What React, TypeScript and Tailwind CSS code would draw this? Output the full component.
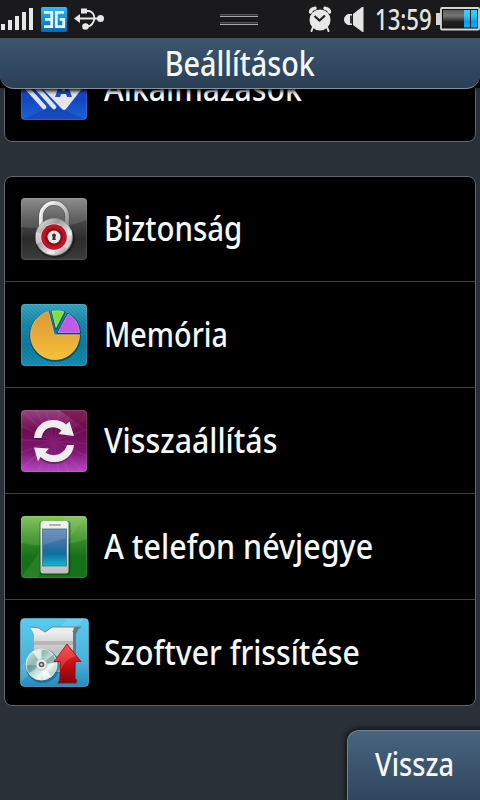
import type { ReactNode } from 'react'

type Row = { label: string; icon: ReactNode; stretch: string }

function Gradient({ id, stops, x2 = 0 }: { id: string; stops: string[]; x2?: number }) {
  return (
    <linearGradient id={id} x1="0" y1="0" x2={x2} y2="1">
      {stops.map((color, i) => (
        <stop key={i} offset={i / (stops.length - 1)} stopColor={color} />
      ))}
    </linearGradient>
  )
}

function Tile({ id, stops, children }: { id: string; stops: string[]; children: ReactNode }) {
  return (
    <svg width="66" height="62" viewBox="0 0 66 62">
      <defs>
        <Gradient id={id} stops={stops} />
        <clipPath id={`${id}-clip`}>
          <rect width="66" height="62" rx="4" />
        </clipPath>
      </defs>
      <g clipPath={`url(#${id}-clip)`}>
        <rect width="66" height="62" fill={`url(#${id})`} />
        {children}
      </g>
      <rect x=".5" y=".5" width="65" height="61" rx="3.5" fill="none" stroke="#fff" strokeOpacity=".1" />
    </svg>
  )
}

function AppsIcon() {
  return (
    <Tile id="apps" stops={['#3c86e8', '#1d50c4', '#1247c0', '#1f62d4']}>
      <path d="M0 62 33 48 66 62z" fill="#0c2f9a" opacity=".35" />
      <path d="M-3 20 23 49M7 20 33 49" stroke="#dfe3ea" strokeWidth="4.5" strokeLinecap="round" />
      <path d="M17 26 40 10 63 28 45 51q-2 2-4 0z" fill="#e4e6ec" />
      <path d="m34 39 6-17h5l6 17h-5l-1-3h-5l-1 3zm7-6h3l-1.500-5z" fill="#1c4fc0" />
    </Tile>
  )
}

function LockIcon() {
  return (
    <Tile id="lock" stops={['#7d7d7d', '#4a4a4a', '#2b2b2b', '#3d3d3d']}>
      <defs>
        <Gradient id="steel" stops={['#ffffff', '#9c9c9c', '#e8e8e8', '#777777']} x2={1} />
        <Gradient id="shackle" stops={['#f4f4f4', '#cdcdcd', '#888888']} x2={1} />
      </defs>
      <path d="M0 0h66v22Q38 33 0 29z" fill="#fff" opacity=".13" />
      <ellipse cx="34" cy="41" rx="20" ry="19" fill="#000" opacity=".35" />
      <path d="M20 30V18a13 13 0 0 1 26 0v12" fill="none" stroke="#555" strokeWidth="5" />
      <path d="M20 30V18a13 13 0 0 1 26 0v12" fill="none" stroke="url(#shackle)" strokeWidth="3.800" />
      <path d="M19 28V18a13.500 13.500 0 0 1 13.500-13.500" fill="none" stroke="#fff" strokeWidth="1" />
      <circle cx="33" cy="39" r="18.500" fill="url(#steel)" stroke="#8b8b8b" strokeWidth=".7" />
      <path d="M33 39 15 34v12zM33 39l18-7v5z" fill="#fff" opacity=".45" />
      <path d="m33 39-7 17h8zM33 39l13 12 4-6z" fill="#fff" opacity=".3" />
      <circle cx="33" cy="39" r="13.500" fill="#ddd" />
      <circle cx="33" cy="39" r="12.800" fill="#bd1525" />
      <circle cx="33" cy="39" r="9" fill="#8f0d19" />
      <circle cx="33" cy="39" r="6.500" fill="#e9e9e9" />
      <circle cx="33" cy="37.500" r="1.900" fill="#333" />
      <path d="M32 38h2l.8 4h-3.600z" fill="#333" />
    </Tile>
  )
}

function PieIcon() {
  return (
    <Tile id="pie" stops={['#3ba5c1', '#1787a8', '#0e7a9e', '#178fb1']}>
      <defs>
        <Gradient id="gold" stops={['#d99a35', '#e8aa38', '#f4c338']} />
        <pattern id="hatch" width="4" height="4" patternUnits="userSpaceOnUse">
          <path d="m0 0 4 4" stroke="#04506c" strokeWidth=".7" opacity=".3" />
        </pattern>
      </defs>
      <rect width="66" height="62" fill="url(#hatch)" />
      <g fill="#043c50" stroke="#043c50" strokeWidth="2" strokeLinejoin="round" opacity=".7">
        <path d="M33.500 31.500h25.500A24.800 24.800 0 1 1 28 8z" />
        <path d="m36.500 29 10-19q12 6 12.500 19zM35 25 31 7.500q7-1 12.500 1z" />
      </g>
      <path d="M33.500 30.800h25A24.500 24.500 0 1 1 27.500 7.500z" fill="url(#gold)" stroke="#f7d27b" strokeWidth=".6" />
      <path d="m37 28.500 10-18.500q11 6 11.500 18.500z" fill="#c05be6" stroke="#dd94f5" strokeWidth=".7" />
      <path d="M35 23.500 31 7q7-1 12 .8z" fill="#7ee03c" stroke="#b3f57d" strokeWidth=".7" />
    </Tile>
  )
}

function ResetIcon() {
  return (
    <Tile id="reset" stops={['#9c4284', '#6d0e52', '#7d1770', '#ba4ac5']}>
      <g stroke="#ef7be0" strokeWidth="1.500" opacity=".1">
        <path d="M33 31 0 0M33 31 12-4M33 31 24-4M33 31 40-4M33 31 54-4M33 31 70 4M33 31 70 18M33 31 70 34M33 31 70 48M33 31 66 66M33 31 50 66M33 31 38 66M33 31 26 66M33 31 14 66M33 31-2 60M33 31-4 44M33 31-4 30M33 31-4 14" />
      </g>
      <path d="M38 0h28v20z" fill="#6b003b" opacity=".5" />
      <g transform="translate(0 1.500)" stroke="#3c0635" strokeWidth="7" fill="none" opacity=".45">
        <path d="M17 28Q20 13 33 13q7 0 12 6M49 35q-3 14-17 14-7 0-11-6" />
      </g>
      <g fill="#ededed">
        <path d="M13 28C14 17 22 10 32 10c6 0 10 1.500 13 4.500l3.500-3L53 26l-15.500-2 3-3.500C32 14 22 18 20.500 28z" />
        <path d="M53 35C52 45 44 52 34 52c-7 0-11-2-14.500-5l-2.500 4.500-4-14L28 38.500l-3.500 4C32 48 43 45 46 35z" />
      </g>
    </Tile>
  )
}

function PhoneIcon() {
  return (
    <Tile id="phone" stops={['#79bd53', '#3c8e2b', '#157019', '#157318']}>
      <defs>
        <Gradient id="screen" stops={['#5c82b2', '#4472a8', '#0d70a0', '#12b8d0']} />
        <Gradient id="body" stops={['#f4f4f4', '#dcdcdc', '#bebebe']} />
      </defs>
      <path d="M0 62 44 0h22L16 62z" fill="#aee884" opacity=".12" />
      <path d="M0 0h66v23Q34 34 0 27z" fill="#b6ef92" opacity=".17" />
      <rect x="18.500" y="5" width="31" height="54" rx="3" fill="#043605" opacity=".45" />
      <rect x="19.500" y="5" width="28" height="52.500" rx="2.500" fill="url(#body)" />
      <rect x="28" y="8" width="12" height="2" rx="1" fill="#b1b1b1" />
      <rect x="21.500" y="13" width="24" height="37" fill="url(#screen)" stroke="#446b8b" strokeWidth=".8" />
      <path d="M22 13.500h23V22L22 29z" fill="#fff" opacity=".12" />
    </Tile>
  )
}

function UpdateIcon() {
  return (
    <svg width="69" height="69" viewBox="0 0 69 69">
      <defs>
        <Gradient id="sky" stops={['#55ccf2', '#54bde2', '#4aaed4', '#268ac0']} />
        <Gradient id="box" stops={['#ececec', '#c0c0c0', '#e8e8e8']} />
        <Gradient id="arrow" stops={['#f0403c', '#c81015', '#850507']} />
        <Gradient id="disc" stops={['#e6f4f0', '#8fb9b2', '#edf7f3', '#78aaa0']} x2={1} />
      </defs>
      <rect x=".5" y=".5" width="68" height="68" rx="4" fill="url(#sky)" stroke="#82d8f2" strokeOpacity=".5" />
      <path d="M1 48 48 1h16L1 64z" fill="#fff" opacity=".13" />
      <path d="M15 15h41v40H15z" fill="#347b96" opacity=".6" />
      <path d="M14 14h39v40H14z" fill="url(#box)" />
      <path d="m10 9 9 1 6 4 7-5h24l-5 6H28l-3 2-11-1z" fill="#ededed" />
      <path d="M54 9h7q-4 3-5 7v26h-3V14z" fill="#68777d" />
      <path d="m10 9 9 1 6 4 7-5h29" stroke="#6b858e" fill="none" />
      <path d="M14 26h39M14 24h39" stroke="#9b9b9b" />
      <circle cx="22.500" cy="48" r="17" fill="#286279" opacity=".7" />
      <circle cx="21.500" cy="46.500" r="15.500" fill="url(#disc)" stroke="#e6ffff" strokeWidth=".8" />
      <path d="m21.500 46.500-9-13 9-2zM21.500 46.500l10 12-8 3z" fill="#fff" opacity=".7" />
      <path d="m21.500 46.500 12-10 3 8zM21.500 46.500l-13 9-2-8z" fill="#497f7d" opacity=".5" />
      <circle cx="21.500" cy="46.500" r="5.500" fill="#e5ecec" stroke="#9dacac" strokeWidth=".7" />
      <circle cx="21.500" cy="46.500" r="2.800" fill="#555" />
      <circle cx="21.500" cy="46.500" r="1.200" fill="#ddd" />
      <path d="M47 26 61 43.500h-6V61q3 0 1 4H38q2-2 2-6V43.500h-6z" fill="url(#arrow)" stroke="#8b0c0e" strokeWidth=".8" />
      <path d="M47 27 34 43h7v9q4-12 15-14z" fill="#ff7a73" opacity=".35" />
    </svg>
  )
}

function SignalIcon() {
  return (
    <svg width="33" height="22" viewBox="0 0 33 22" fill="#e6e6e6">
      <path d="M1 16h4v6H1zM8 12h4v10H8zM15 8h4v14h-4zM22 4h4v18h-4zM29 0h4v22h-4z" />
    </svg>
  )
}

function NetworkIcon() {
  return (
    <svg width="26" height="25" viewBox="0 0 26 25">
      <defs>
        <Gradient id="net" stops={['#2fbdf0', '#168ed4', '#0a67b4']} />
      </defs>
      <rect width="26" height="25" rx="1.500" fill="url(#net)" />
      <g fill="none" stroke="#e8f3f8" strokeWidth="2.800">
        <path d="M3 5.300h7.700v14.400H3M4 12.300h6.500" />
        <path d="M23 5.300h-7.700v14.400h7.400v-7.400h-4" />
      </g>
    </svg>
  )
}

function UsbIcon() {
  return (
    <svg width="31" height="24" viewBox="0 0 31 24" fill="#e6e6e6">
      <path d="M0 11.500 6 7v9z" />
      <circle cx="26.500" cy="11.500" r="3.500" />
      <circle cx="11.500" cy="19.500" r="3.300" />
      <path d="M7 1.500h6v5H7z" />
      <path d="M4 11.500h22M12 4h3q5 1 5.500 7.500M11 19.500h3q5-1 6.500-8" fill="none" stroke="#e6e6e6" strokeWidth="1.800" />
    </svg>
  )
}

function AlarmIcon() {
  return (
    <svg width="24" height="26" viewBox="0 0 24 26">
      <g stroke="#e8e8e8" strokeWidth="3.500" strokeLinecap="round" fill="none">
        <path d="M2.500 6Q3 3 7 2.300M21.500 6Q21 3 17 2.300" />
      </g>
      <path d="m5 21-1.500 4M19 21l1.500 4" stroke="#e8e8e8" strokeWidth="2" strokeLinecap="round" />
      <circle cx="12" cy="14" r="10.500" fill="#e8e8e8" />
      <path d="m6.500 10 5 4.500L17 9.500" fill="none" stroke="#222" strokeWidth="2.300" />
    </svg>
  )
}

function SpeakerIcon() {
  return (
    <svg width="20" height="25" viewBox="0 0 20 25" fill="#e4e4e4">
      <path d="M19.500 0v25h-1L9 18V7l9-7z" />
      <path d="M8 7v11H4q-4-2-4-5.500T4 7z" />
      <path d="M6 8.500h2v8H6z" fill="#333" />
    </svg>
  )
}

function BatteryIcon() {
  return (
    <svg width="44" height="24" viewBox="0 0 44 24">
      <defs>
        <Gradient id="cell" stops={['#5b5b5b', '#777777', '#222222', '#181818']} />
        <Gradient id="charge" stops={['#3acbff', '#35c4ff', '#009fee', '#0aaeff']} />
      </defs>
      <path d="M0 6h5v12H0z" fill="#d6d6d6" />
      <rect x="5" y="1" width="38" height="21.500" rx="1" fill="#111" stroke="#d6d6d6" strokeWidth="1.800" />
      <rect x="7" y="3" width="21" height="17.500" fill="url(#cell)" />
      <path d="M28 3h6v17.500h-6zM35 3h6v17.500h-6z" fill="url(#charge)" />
    </svg>
  )
}

const rows: Row[] = [
  { label: 'Biztonság', icon: <LockIcon />, stretch: 'scale-x-[0.865]' },
  { label: 'Memória', icon: <PieIcon />, stretch: 'scale-x-[0.845]' },
  { label: 'Visszaállítás', icon: <ResetIcon />, stretch: 'scale-x-[0.89]' },
  { label: 'A telefon névjegye', icon: <PhoneIcon />, stretch: 'scale-x-[0.895]' },
  { label: 'Szoftver frissítése', icon: <UpdateIcon />, stretch: 'scale-x-[0.888]' },
]

function SettingsRow({ label, icon, stretch }: Row) {
  return (
    <li className="flex h-[106px] items-center border-b border-[#3a3f43] first:h-[105px] last:h-[105px] last:border-b-0">
      <div className="flex w-[98px] shrink-0 justify-center">{icon}</div>
      <span className={`ml-px origin-left pb-0.5 text-[34px] leading-none font-medium whitespace-nowrap ${stretch}`}>
        {label}
      </span>
    </li>
  )
}

export default function App() {
  return (
    <main className="flex h-[800px] w-[480px] flex-col overflow-hidden bg-[#293038] font-['Noto_Sans',sans-serif] text-[#f5f8f8]">
      {/* Status bar */}
      <div className="flex h-[38px] shrink-0 items-center bg-[#1a1a1c]">
        <SignalIcon />
        <div className="ml-2">
          <NetworkIcon />
        </div>
        <div className="ml-[7px]">
          <UsbIcon />
        </div>
        <div className="ml-[115px] flex h-[11px] w-[38px] flex-col justify-between">
          <div className="h-[3px] border-t border-b border-t-[#555] border-b-[#aaa] bg-[#333]" />
          <div className="h-[3px] border-t border-b border-t-[#555] border-b-[#aaa] bg-[#333]" />
        </div>
        <div className="ml-[50px]">
          <AlarmIcon />
        </div>
        <div className="ml-3">
          <SpeakerIcon />
        </div>
        <div className="ml-[11px] w-[61px]">
          <span className="inline-block origin-left scale-x-[0.79] text-[28px] leading-[36px] font-medium text-[#e4e4e4]">
            13:59
          </span>
        </div>
        <BatteryIcon />
      </div>

      {/* Title */}
      <div className="h-[50px] shrink-0 bg-black">
        <h1 className="relative z-10 flex h-[51px] items-center justify-center rounded-b-[14px] border-b border-[#8492a0] bg-linear-to-b from-[#3d566e] via-[#324b62] to-[#2c3f54] shadow-[0_2px_4px_#000]">
          <span className="scale-x-[0.845] text-[34px] leading-none font-medium">Beállítások</span>
        </h1>
      </div>

      {/* Scrolled list */}
      <div className="flex-1 overflow-hidden px-1">
        <ul className="-mt-[53px] rounded-lg border border-[#5c656c] bg-black">
          <SettingsRow label="Alkalmazások" icon={<AppsIcon />} stretch="scale-x-[0.888]" />
        </ul>
        <ul className="mt-[34px] rounded-lg border border-[#5c656c] bg-black">
          {rows.map((row) => (
            <SettingsRow key={row.label} {...row} />
          ))}
        </ul>
      </div>

      {/* Soft key */}
      <div className="flex h-[70px] shrink-0 justify-end">
        <button className="flex w-[133px] items-center justify-center rounded-tl-[12px] border-t border-l border-[#6d8497] bg-linear-to-b from-[#48647e] to-[#30475e] shadow-[0_0_5px_2px_#10151a]">
          <span className="scale-x-[0.85] pb-1 text-[32px] leading-none font-medium">Vissza</span>
        </button>
      </div>
    </main>
  )
}
